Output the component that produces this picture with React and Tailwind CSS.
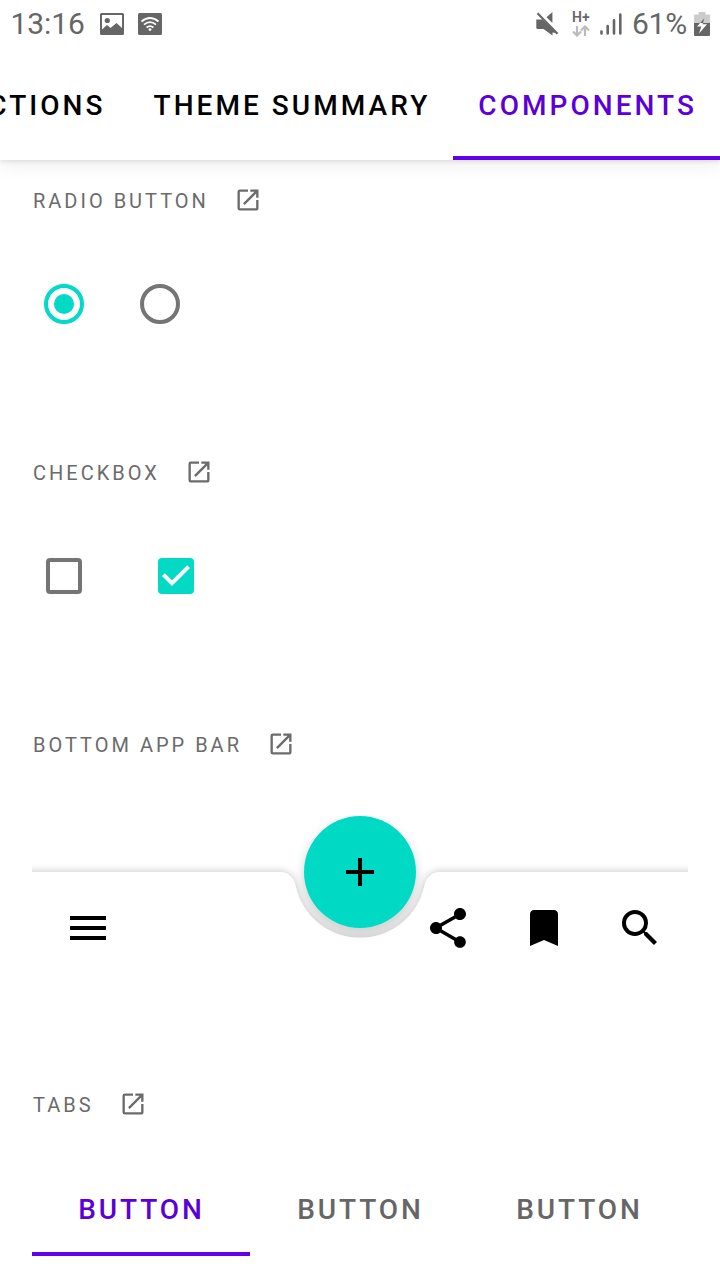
import React from "react";

function OpenInNew() {
  return (
    <svg viewBox="0 0 24 24" className="size-7 fill-[#6b6b6b]" aria-hidden="true">
      <path d="M19 19H5V5h7V3H5a2 2 0 0 0-2 2v14a2 2 0 0 0 2 2h14c1.1 0 2-.9 2-2v-7h-2v7zM14 3v2h3.59l-9.83 9.83 1.41 1.41L19 6.41V10h2V3h-7z" />
    </svg>
  );
}

function SectionTitle({ children }) {
  return (
    <h2 className="flex h-8 items-center gap-[25px] pl-[33px] text-[20px] font-normal tracking-[3px] text-[#6b6b6b]">
      <span className="pt-0.5 leading-8">{children}</span>
      <OpenInNew />
    </h2>
  );
}

function StatusBar() {
  return (
    <div className="flex h-12 items-center pl-[10.5px] pr-[10px] text-[30px] leading-[46px] text-[#666]">
      <span className="tracking-[-0.1px]">13:16</span>
      <svg viewBox="0 0 24 22" className="ml-[15px] h-[22px] w-6" aria-hidden="true">
        <path fill="#666" fillRule="evenodd" d="M1.5 0h21A1.5 1.5 0 0 1 24 1.5v19a1.5 1.5 0 0 1-1.5 1.5h-21A1.5 1.5 0 0 1 0 20.500v-19A1.500 1.500 0 0 1 1.500 0zM2 2v14.500l5-4.500 3.500 3 6-5 5.500 5V2z" />
        <circle cx="7.300" cy="7.500" r="2.600" fill="#666" />
      </svg>
      <svg viewBox="0 0 24 22" className="ml-[14px] h-[22px] w-6" aria-hidden="true">
        <rect width="24" height="22" rx="1.5" fill="#666" />
        <g fill="none" stroke="#fff" strokeWidth="1.8">
          <path d="M3.500 8.500Q12 1.500 20.500 8.500M6 11.600Q12 6.600 18 11.600M8.600 14.500Q12 11.700 15.400 14.500" />
        </g>
        <circle cx="12" cy="16.600" r="1.400" fill="#fff" />
      </svg>
      <svg viewBox="0 0 24 24" className="ml-auto h-6 w-6" aria-hidden="true">
        <path fill="#666" d="M.3 7.500h6L20 21l-3.500-.5v3L7.500 17h-6A1.200 1.200 0 0 1 .3 15.800zM10.500 5.200 16.400 0v11z" />
        <path stroke="#fff" strokeWidth="1.300" d="M3.500.2 23.500 20" />
        <path stroke="#666" strokeWidth="2.200" d="M1.500 1.200 21.500 21.700" />
      </svg>
      <div className="ml-3 flex w-[18px] flex-col items-center gap-px">
        <span className="text-[14px] font-semibold leading-[13px]">H+</span>
        <svg viewBox="0 0 18 12" className="h-3 w-[18px]" fill="none" stroke="#bbb" strokeWidth="2.200" aria-hidden="true">
          <path d="M5 1v9M1 6.500l4 4 4-4M13 11V2M9 5.500l4-4 4 4" />
        </svg>
      </div>
      <svg viewBox="0 0 22 22" className="ml-[10px] h-[22px] w-[22px]" stroke="#666" strokeWidth="2.600" strokeLinecap="round" aria-hidden="true">
        <path d="M1.500 18.500v2M7.700 13v7.500M14 7.300v13.200M20.300 1.500v19" />
      </svg>
      <span className="ml-[10px] tracking-[-0.2px]">61%</span>
      <svg viewBox="0 0 16 24" className="ml-[7px] h-6 w-4" aria-hidden="true">
        <path fill="#ccc" d="M4.500 0h7v2.500H15a1 1 0 0 1 1 1V12H0V3.500a1 1 0 0 1 1-1h3.500z" />
        <path fill="#666" d="M0 11h16v12a1 1 0 0 1-1 1H1a1 1 0 0 1-1-1z" />
        <path fill="#fff" d="M10.500 6 3 14.500h4.300L5 21.500l8-9.300H8.500z" />
        <path fill="#666" d="M10.500 6 6 11h3z" />
      </svg>
    </div>
  );
}

function BottomAppBar() {
  return (
    <div className="relative mx-8 mt-14 flex h-[168px] items-end overflow-hidden">
      <svg viewBox="0 0 656 168" className="absolute inset-0 h-[168px] w-[656px]" aria-hidden="true">
        <defs>
          <filter id="barShadow" x="-10%" y="-30%" width="120%" height="160%">
            <feDropShadow dx="0" dy="0" stdDeviation="4" floodColor="#000" floodOpacity="0.25" />
          </filter>
          <filter id="notchShadow" x="-30%" y="-30%" width="160%" height="160%">
            <feGaussianBlur stdDeviation="4" />
          </filter>
          <filter id="fabShadow" x="-30%" y="-30%" width="160%" height="160%">
            <feDropShadow dx="0" dy="3" stdDeviation="6" floodColor="#000" floodOpacity="0.12" />
          </filter>
        </defs>
        <circle cx="328" cy="65" r="56" fill="#000" fillOpacity="0.09" filter="url(#notchShadow)" />
        <path
          filter="url(#barShadow)"
          fill="#fff"
          d="M-40 56H247.600A16 16 0 0 1 263.300 68.900A66 66 0 0 0 392.700 68.900A16 16 0 0 1 408.400 56H696V240H-40z"
        />
        <circle cx="328" cy="56" r="56" fill="#03dac5" filter="url(#fabShadow)" />
        <path d="M314 56h28M328 42v28" stroke="#000" strokeWidth="4" />
      </svg>
      <div className="relative flex h-28 w-full items-center pl-8 pr-6">
        <svg viewBox="0 0 24 24" className="size-12" aria-hidden="true">
          <path d="M3 18h18v-2H3v2zm0-5h18v-2H3v2zm0-7v2h18V6H3z" />
        </svg>
        <div className="ml-auto flex gap-12">
          <svg viewBox="0 0 24 24" className="size-12" aria-hidden="true">
            <path d="M18 16.080c-.76 0-1.440.3-1.960.77L8.910 12.700c.05-.23.09-.46.09-.7s-.04-.47-.09-.7l7.050-4.110c.54.5 1.250.81 2.040.81 1.660 0 3-1.340 3-3s-1.340-3-3-3-3 1.340-3 3c0 .24.04.47.09.7L8.040 9.810C7.500 9.310 6.790 9 6 9c-1.660 0-3 1.340-3 3s1.340 3 3 3c.79 0 1.500-.31 2.040-.81l7.120 4.160c-.05.21-.08.43-.08.65 0 1.610 1.310 2.920 2.920 2.920s2.920-1.310 2.920-2.920-1.310-2.920-2.920-2.920z" />
          </svg>
          <svg viewBox="0 0 24 24" className="size-12" aria-hidden="true">
            <path d="M17 3H7c-1.100 0-2 .9-2 2v16l7-3 7 3V5c0-1.100-.9-2-2-2z" />
          </svg>
          <svg viewBox="0 0 24 24" className="size-12" aria-hidden="true">
            <path d="M15.500 14h-.79l-.28-.27A6.471 6.471 0 0 0 16 9.500 6.500 6.500 0 1 0 9.500 16c1.610 0 3.090-.59 4.230-1.570l.27.28v.79l5 4.990L20.490 19l-4.990-5zm-6 0C7.010 14 5 11.990 5 9.500S7.010 5 9.500 5 14 7.010 14 9.500 11.990 14 9.500 14z" />
          </svg>
        </div>
      </div>
    </div>
  );
}

export default function App() {
  return (
    <div className="flex h-[1280px] w-[720px] flex-col overflow-hidden bg-white font-['Roboto',sans-serif]">
      <header className="z-10 h-40 shrink-0 bg-white shadow-[0_1px_5px_rgba(0,0,0,0.12),0_7px_18px_rgba(0,0,0,0.06)]">
        <StatusBar />
        <nav className="flex h-28 justify-end overflow-hidden whitespace-nowrap text-[28px] font-medium tracking-[3.05px] text-black">
          <div className="pl-[25px] pr-[23px] pt-[38px] leading-10">CTIONS</div>
          <div className="pl-[25px] pr-[23px] pt-[38px] leading-10">THEME SUMMARY</div>
          <div className="border-b-4 border-[#6200ee] pl-[25px] pr-[23px] pt-[38px] leading-10 text-[#5b00d8]">COMPONENTS</div>
        </nav>
      </header>

      <main className="flex flex-col">
        <section className="h-[272px] pt-6">
          <SectionTitle>RADIO BUTTON</SectionTitle>
          <div className="mt-[68px] flex gap-14 pl-11">
            <span className="flex size-10 items-center justify-center rounded-full border-4 border-[#03dac5]">
              <span className="size-5 rounded-full bg-[#03dac5]" />
            </span>
            <span className="size-10 rounded-full border-4 border-[#757575]" />
          </div>
        </section>

        <section className="h-[272px] pt-6">
          <SectionTitle>CHECKBOX</SectionTitle>
          <div className="mt-[70px] flex gap-[76px] pl-[46px]">
            <span className="size-9 rounded-[4px] border-4 border-[#757575]" />
            <span className="size-9 rounded-[4px] bg-[#03dac5]">
              <svg viewBox="0 0 36 36" className="size-9" fill="none" stroke="#fff" strokeWidth="4" aria-hidden="true">
                <path d="M5.400 16.600 14 25.200 30.600 8.600" />
              </svg>
            </span>
          </div>
        </section>

        <section className="h-[360px] pt-6">
          <SectionTitle>BOTTOM APP BAR</SectionTitle>
          <BottomAppBar />
        </section>

        <section className="pt-6">
          <SectionTitle>TABS</SectionTitle>
          <div className="mx-8 mt-10 grid h-24 grid-cols-[218px_219px_219px] text-center text-[28px] font-medium leading-10 tracking-[2.9px] text-[#666]">
            <div className="border-b-4 border-[#6200ee] pl-px pt-[30px] text-[#5b00d8]">BUTTON</div>
            <div className="pl-0.5 pt-[30px]">BUTTON</div>
            <div className="pl-0.5 pt-[30px]">BUTTON</div>
          </div>
        </section>
      </main>
    </div>
  );
}
